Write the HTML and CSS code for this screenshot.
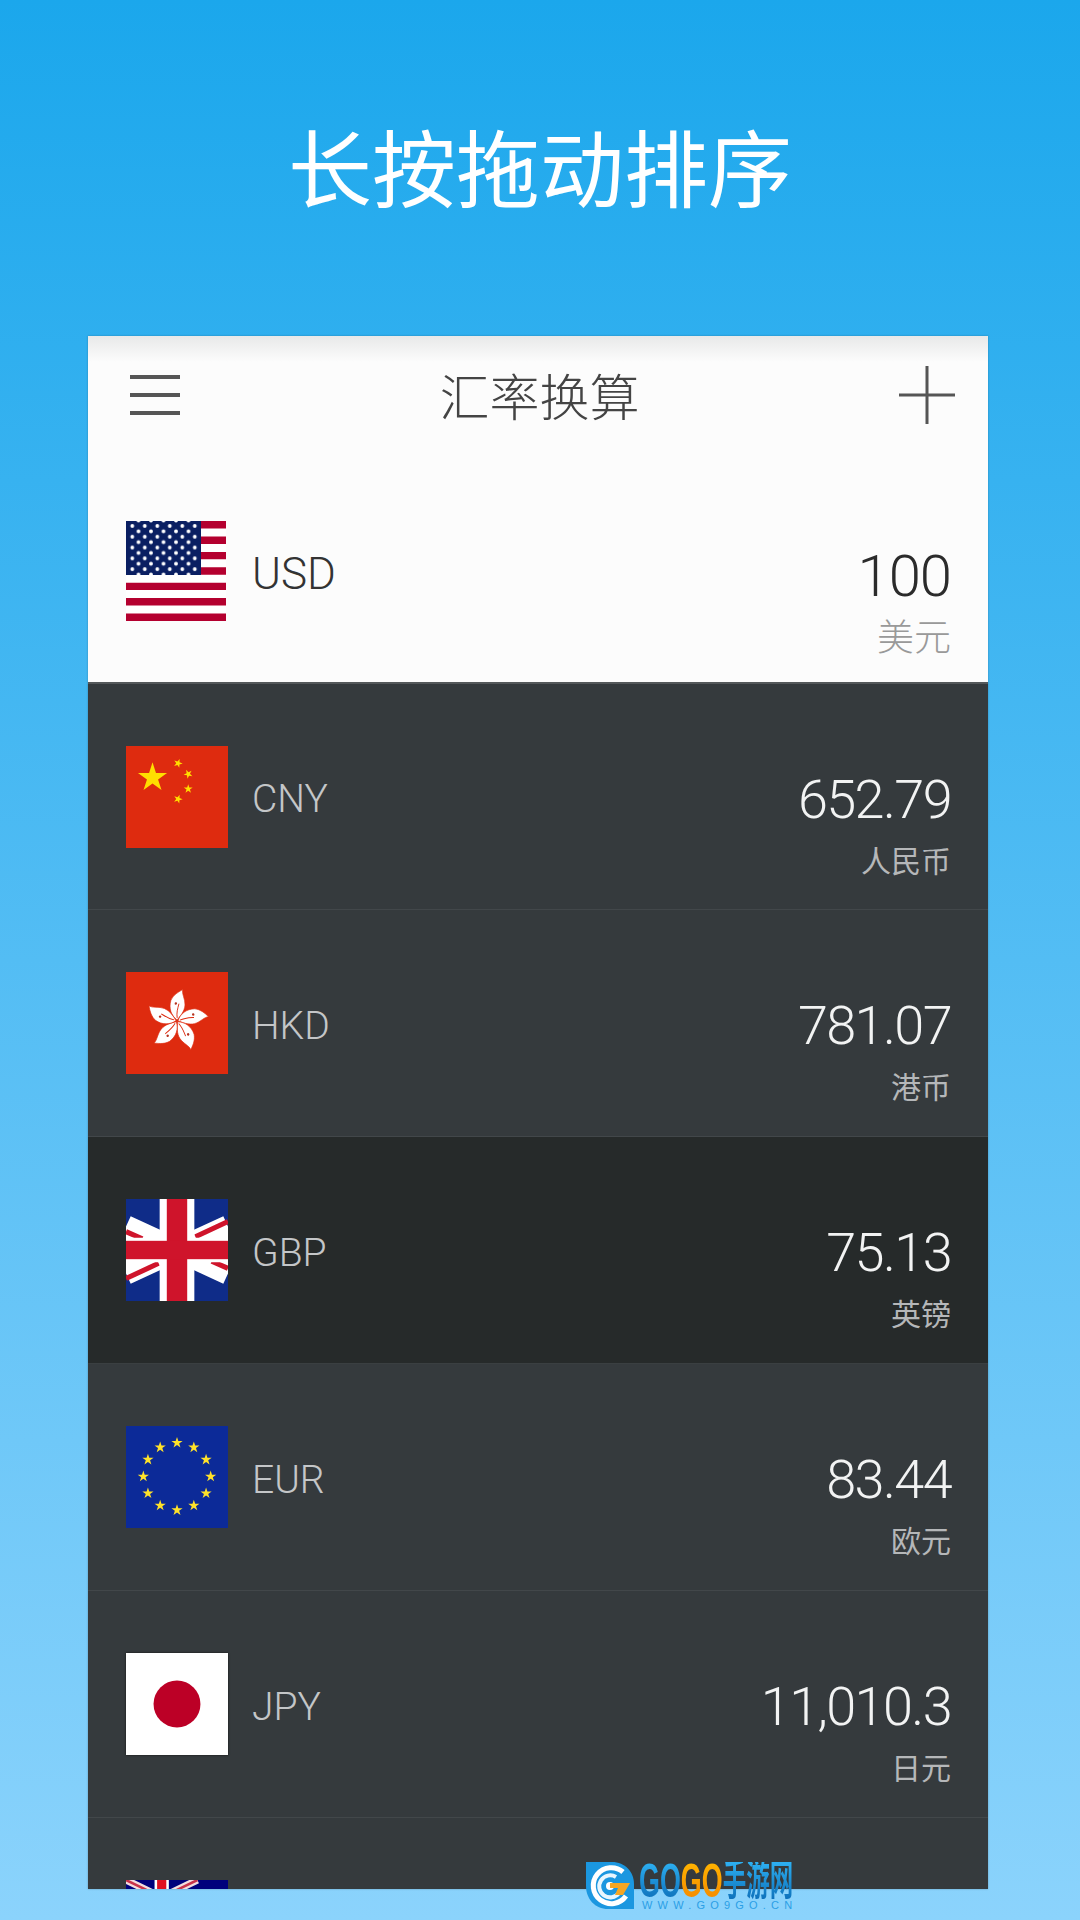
FILE: index.html
```html
<!doctype html>
<html lang="zh-CN">
    <head>
        <meta charset="UTF-8" />
        <title>汇率换算</title>
        <link rel="stylesheet" href="styles.css">
    </head>
    <body>
        <svg class="defs" width="0" height="0">
            <defs>
                <polygon id="star" points="0,-1 0.225,-0.309 0.951,-0.309 0.363,0.118 0.588,0.809 0,0.382 -0.588,0.809 -0.363,0.118 -0.951,-0.309 -0.225,-0.309" />
                <g id="petal">
                    <path d="M0,-1 C-6,-5 -9,-12 -7,-20 C-5,-25 -1,-28 4,-31 C3,-27 7,-22 7,-16 C7,-10 3,-5 0,-1 Z" fill="#fff" stroke="#de2b0f" stroke-width="0.6" />
                    <path d="M0,-3 C-1,-8 0,-12 1,-17" fill="none" stroke="#de2b0f" stroke-width="0.9" />
                    <circle cx="-2" cy="-17" r="1.2" fill="#b5321f" />
                </g>
                <pattern id="usDots" width="12.5" height="10.8" patternUnits="userSpaceOnUse" patternTransform="translate(0 2)">
                    <circle cx="6.3" cy="3" r="1.9" fill="#fff" />
                    <circle cx="12.5" cy="8.4" r="1.9" fill="#fff" />
                    <circle cx="0" cy="8.4" r="1.9" fill="#fff" />
                </pattern>
                <g id="union">
                    <rect width="100" height="100" fill="#0f2c88" />
                    <path d="M0,27 L100,73 M0,73 L100,27" stroke="#fff" stroke-width="22" />
                    <path d="M0,32 L16,39 M100,68 L84,61" stroke="#cf142b" stroke-width="5" />
                    <path d="M0,78 L32,63 M100,22 L68,37" stroke="#cf142b" stroke-width="5" />
                    <rect x="33" width="34" height="100" fill="#fff" />
                    <rect y="38" width="100" height="24" fill="#fff" />
                    <rect x="40" width="20" height="100" fill="#cf142b" />
                    <rect y="41" width="100" height="18" fill="#cf142b" />
                </g>
            </defs>
        </svg>

        <h1 class="headline">长按拖动排序</h1>

        <div class="card">
            <div class="app-bar">
                <div class="menu-icon"><span></span><span></span><span></span></div>
                <div class="app-title">汇率换算</div>
                <svg class="add-icon" width="56" height="58" viewBox="0 0 56 58">
                    <path d="M28 0V58M0 29H56" stroke="#555" stroke-width="3" fill="none" />
                </svg>
            </div>

            <div class="row row-base">
                <svg class="flag flag-us" viewBox="0 0 100 100">
                    <rect width="100" height="100" fill="#fff" />
                    <path d="M0 3.8H100M0 19.2H100M0 34.6H100M0 50H100M0 65.4H100M0 80.8H100M0 96.2H100" stroke="#b4002f" stroke-width="7.4" />
                    <rect width="75" height="54" fill="#0a1f62" />
                    <rect x="3" width="70" height="54" fill="url(#usDots)" />
                </svg>
                <div class="code">USD</div>
                <div class="amount">
                    <div class="value">100</div>
                    <div class="name">美元</div>
                </div>
            </div>

            <div class="row row-first">
                <svg class="flag" viewBox="0 0 100 100">
                    <rect width="100" height="100" fill="#de2b0f" />
                    <g fill="#ffde00">
                        <use href="#star" transform="translate(26 31) scale(15)" />
                        <use href="#star" transform="translate(51 17) rotate(20) scale(4.6)" />
                        <use href="#star" transform="translate(61 27.5) rotate(45) scale(4.6)" />
                        <use href="#star" transform="translate(61 42) scale(4.6)" />
                        <use href="#star" transform="translate(51 52) rotate(20) scale(4.6)" />
                    </g>
                </svg>
                <div class="code">CNY</div>
                <div class="amount">
                    <div class="value">652.79</div>
                    <div class="name">人民币</div>
                </div>
            </div>

            <div class="row">
                <svg class="flag" viewBox="0 0 100 100">
                    <rect width="100" height="100" fill="#de2b0f" />
                    <g transform="translate(50 48)">
                        <use href="#petal" transform="rotate(3)" />
                        <use href="#petal" transform="rotate(75)" />
                        <use href="#petal" transform="rotate(147)" />
                        <use href="#petal" transform="rotate(219)" />
                        <use href="#petal" transform="rotate(291)" />
                    </g>
                </svg>
                <div class="code">HKD</div>
                <div class="amount">
                    <div class="value">781.07</div>
                    <div class="name">港币</div>
                </div>
            </div>

            <div class="row row-active">
                <svg class="flag" viewBox="0 0 100 100"><use href="#union" /></svg>
                <div class="code">GBP</div>
                <div class="amount">
                    <div class="value">75.13</div>
                    <div class="name">英镑</div>
                </div>
            </div>

            <div class="row">
                <svg class="flag" viewBox="0 0 100 100">
                    <rect width="100" height="100" fill="#0c2a98" />
                    <g fill="#ffe22a">
                        <use href="#star" transform="translate(50 16.5) scale(5.8)" />
                        <use href="#star" transform="translate(66.5 21) scale(5.8)" />
                        <use href="#star" transform="translate(78.5 33) scale(5.8)" />
                        <use href="#star" transform="translate(83 49.5) scale(5.8)" />
                        <use href="#star" transform="translate(78.5 66) scale(5.8)" />
                        <use href="#star" transform="translate(66.5 78) scale(5.8)" />
                        <use href="#star" transform="translate(50 82.5) scale(5.8)" />
                        <use href="#star" transform="translate(33.5 78) scale(5.8)" />
                        <use href="#star" transform="translate(21.5 66) scale(5.8)" />
                        <use href="#star" transform="translate(17 49.5) scale(5.8)" />
                        <use href="#star" transform="translate(21.5 33) scale(5.8)" />
                        <use href="#star" transform="translate(33.5 21) scale(5.8)" />
                    </g>
                </svg>
                <div class="code">EUR</div>
                <div class="amount">
                    <div class="value">83.44</div>
                    <div class="name">欧元</div>
                </div>
            </div>

            <div class="row">
                <svg class="flag flag-jp" viewBox="0 0 100 100">
                    <rect width="100" height="100" fill="#fff" />
                    <circle cx="50" cy="50" r="23" fill="#bc0026" />
                </svg>
                <div class="code">JPY</div>
                <div class="amount">
                    <div class="value">11,010.3</div>
                    <div class="name">日元</div>
                </div>
            </div>

            <!-- next row is cut off by the card, only the top of its flag shows -->
            <div class="row">
                <svg class="flag" viewBox="0 0 100 100">
                    <rect width="100" height="100" fill="#00007c" />
                    <path d="M0,0 L70,34 M70,0 L0,34" stroke="#f3dede" stroke-width="7" />
                    <path d="M0,0 L70,34 M70,0 L0,34" stroke="#c8324a" stroke-width="2.5" />
                    <rect x="28" width="14" height="34" fill="#fff" />
                    <rect x="30.5" width="9" height="34" fill="#e01020" />
                </svg>
            </div>
        </div>

        <div class="watermark">
            <svg class="wm-logo" width="48" height="47" viewBox="0 0 48 47">
                <path d="M0 0H26C39 0 48 10 48 22V47H22C9 47 0 37 0 24Z" fill="#1b97e0" />
                <path d="M37 10A18 18 0 1 0 40 34" fill="none" stroke="#fff" stroke-width="5" />
                <path d="M30 15A11 11 0 1 0 33 31" fill="none" stroke="#e8f6fe" stroke-width="4" />
                <circle cx="24" cy="24" r="4" fill="#fff" />
                <path d="M24 21H44L37 33H29L32 26H24Z" fill="#f5a623" />
            </svg>
            <div class="wm-text">
                <div class="wm-title"><span class="wm-blue">GO</span><span class="wm-orange">GO</span><span class="wm-blue wm-cjk">手游网</span></div>
                <div class="wm-url">WWW.GO9GO.CN</div>
            </div>
        </div>
    </body>
</html>
```

FILE: styles.css
```css
* {
    box-sizing: border-box;
}
body {
    margin: 0;
    height: 1920px;
    overflow: hidden;
    position: relative;
    font-family: Roboto, "Noto Sans CJK SC", sans-serif;
    background: linear-gradient(#1ba7ec, #8bd3fc);
}
.defs {
    position: absolute;
}
.headline {
    margin: 0;
    height: 336px;
    padding-top: 115px;
    text-align: center;
    color: #fff;
    font-family: "Noto Sans CJK SC", sans-serif;
    font-size: 84px;
    font-weight: 400;
    line-height: 100px;
}
.card {
    margin: 0 92px 0 88px;
    height: 1553px;
    overflow: hidden;
    background: #353a3d;
    box-shadow: 0 0 2px rgba(0, 0, 0, 0.25);
}
.app-bar {
    height: 123px;
    padding: 30px 33px 0 42px;
    display: flex;
    justify-content: space-between;
    align-items: flex-start;
    background: linear-gradient(#e8e9e9, #fcfcfc 26px);
}
.menu-icon {
    margin-top: 9px;
    width: 50px;
    display: flex;
    flex-direction: column;
    gap: 14px;
}
.menu-icon span {
    height: 4px;
    background: #555;
}
.app-title {
    margin-top: -3px;
    font-family: "Noto Sans CJK SC", sans-serif;
    font-weight: 300;
    font-size: 50px;
    line-height: 62px;
    color: #444;
}
.row {
    height: 227px;
    padding: 0 37px 0 38px;
    display: flex;
    align-items: center;
    background: #353a3d;
    border-bottom: 1px solid #42474a;
    color: #c4c6c8;
}
.row-base {
    height: 225px;
    background: #fcfcfc;
    border-bottom: 2px solid #54585a;
    color: #333;
}
.row-first {
    height: 226px;
}
.row-active {
    background: #262a2a;
    border-bottom-color: #3a3f41;
}
.flag {
    width: 102px;
    height: 102px;
    flex: none;
}
.flag-us {
    width: 100px;
    height: 100px;
}
.flag-jp {
    box-shadow: 0 0 2px #111;
}
.code {
    margin: 5px 0 0 24px;
    font-size: 39px;
    font-weight: 300;
}
.row-base .code {
    margin: 6px 0 0 26px;
    font-size: 44px;
}
.amount {
    margin-left: auto;
    text-align: right;
    margin-top: 52px;
}
.row-base .amount {
    margin-top: 56px;
}
.value {
    font-size: 54px;
    font-weight: 300;
    letter-spacing: -1.6px;
    line-height: 66px;
    color: #f2f3f3;
}
.row-base .value {
    font-size: 58px;
    letter-spacing: -1px;
    color: #2b2b2b;
}
.name {
    margin-top: 6px;
    font-family: "Noto Sans CJK SC", sans-serif;
    font-weight: 400;
    font-size: 30px;
    line-height: 40px;
    color: #b5b7b9;
}
.row-base .name {
    font-size: 37px;
    font-weight: 300;
    color: #999;
}
.watermark {
    position: absolute;
    left: 586px;
    top: 1862px;
    display: flex;
    gap: 5px;
}
.wm-text {
    width: 160px;
}
.wm-title {
    width: 300px;
    height: 38px;
    display: flex;
    font-family: "Liberation Sans", "Noto Sans CJK SC", sans-serif;
    font-weight: 700;
    font-size: 48px;
    line-height: 38px;
    white-space: nowrap;
    transform: scaleX(0.56);
    transform-origin: left top;
}
.wm-blue,
.wm-orange {
    -webkit-background-clip: text;
    background-clip: text;
    color: transparent;
}
.wm-blue {
    background-image: linear-gradient(#2db0f2, #0d70ba);
}
.wm-orange {
    background-image: linear-gradient(#ffb400, #f58a00);
}
.wm-cjk {
    font-size: 42px;
}
.wm-url {
    margin-left: 3px;
    font-family: "Liberation Sans", sans-serif;
    font-size: 11px;
    line-height: 11px;
    letter-spacing: 5.2px;
    color: #2a9fe6;
    white-space: nowrap;
}
```
